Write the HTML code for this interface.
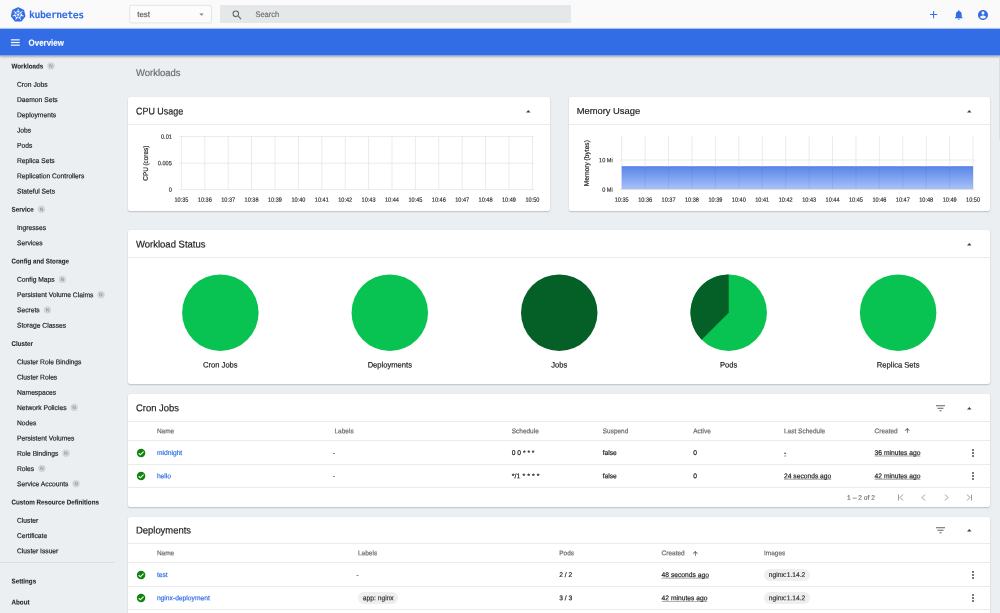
<!DOCTYPE html>
<html lang="en"><head><meta charset="utf-8"><title>Kubernetes Dashboard</title>
<style>
html,body{margin:0;padding:0;}
body{width:1000px;height:613px;overflow:hidden;position:relative;background:#eceff1;font-family:"Liberation Sans",Arial,sans-serif;}
.t{position:absolute;white-space:nowrap;}
.card{position:absolute;background:#fff;border-radius:2px;box-shadow:0 1px 1.5px rgba(0,0,0,.19),0 0 1px rgba(0,0,0,.10);}
.bd{display:inline-block;width:7.4px;height:7.4px;border-radius:50%;background:#d4d7d9;color:#8a8d8f;font-size:4.2px;line-height:7.4px;text-align:center;font-weight:400;letter-spacing:0;vertical-align:0.4px;margin-left:4.2px;}
.u{text-decoration:underline;text-decoration-style:dotted;text-decoration-thickness:.6px;text-underline-offset:1px;}
.chip{position:absolute;background:#efefef;border-radius:6.1px;height:12.2px;}
svg{position:absolute;overflow:visible;}
</style></head><body>

<div style="position:absolute;left:0.00px;top:0.00px;width:1000.00px;height:28.50px;background:#fafafa;"></div>
<svg style="left:0;top:0" width="40" height="29" viewBox="0 0 40 29">
<polygon points="18.15,7.80 23.54,10.40 24.88,16.24 21.14,20.92 15.16,20.92 11.42,16.24 12.76,10.40" fill="#326de6" stroke="#326de6" stroke-width="1.2" stroke-linejoin="round"/>
<g stroke="#fff" stroke-width="0.75" fill="none" stroke-linecap="round"><line x1="18.15" y1="13.50" x2="18.15" y2="11.40" stroke-width="0.5"/><line x1="18.15" y1="11.40" x2="18.15" y2="9.50" stroke-width="0.95"/><line x1="19.09" y1="13.95" x2="20.73" y2="12.64" stroke-width="0.5"/><line x1="20.73" y1="12.64" x2="22.22" y2="11.46" stroke-width="0.95"/><line x1="19.32" y1="14.97" x2="21.37" y2="15.43" stroke-width="0.5"/><line x1="21.37" y1="15.43" x2="23.22" y2="15.86" stroke-width="0.95"/><line x1="18.67" y1="15.78" x2="19.58" y2="17.67" stroke-width="0.5"/><line x1="19.58" y1="17.67" x2="20.41" y2="19.39" stroke-width="0.95"/><line x1="17.63" y1="15.78" x2="16.72" y2="17.67" stroke-width="0.5"/><line x1="16.72" y1="17.67" x2="15.89" y2="19.39" stroke-width="0.95"/><line x1="16.98" y1="14.97" x2="14.93" y2="15.43" stroke-width="0.5"/><line x1="14.93" y1="15.43" x2="13.08" y2="15.86" stroke-width="0.95"/><line x1="17.21" y1="13.95" x2="15.57" y2="12.64" stroke-width="0.5"/><line x1="15.57" y1="12.64" x2="14.08" y2="11.46" stroke-width="0.95"/>
<circle cx="18.15" cy="14.7" r="3.3" stroke-width="0.75"/></g>
<circle cx="18.15" cy="14.7" r="0.9" fill="#fff"/>
</svg>
<div style="position:absolute;left:220.00px;top:5.40px;width:351.00px;height:17.60px;background:#e5e8e9;border-radius:1px;"></div>
<svg style="left:230.9px;top:8.9px" width="12.2" height="12.2" viewBox="0 0 24 24"><path fill="#5f6368" d="M15.5 14h-.79l-.28-.27A6.47 6.47 0 0 0 16 9.5 6.5 6.5 0 1 0 9.500 16c1.610 0 3.090-.590 4.230-1.570l.27.28v.79l5 4.990L20.490 19zm-6 0C7.010 14 5 11.990 5 9.500S7.010 5 9.500 5 14 7.010 14 9.500 11.990 14 9.500 14"/></svg>
<svg style="left:929.9px;top:11.2px" width="7.2" height="7.2" viewBox="0 0 14 14"><path fill="#326de6" d="M14 8H8v6H6V8H0V6h6V0h2v6h6z"/></svg>
<svg style="left:952.7px;top:8.7px" width="11.6" height="11.6" viewBox="0 0 24 24"><path fill="#326de6" d="M12 22c1.100 0 2-.900 2-2h-4c0 1.100.890 2 2 2m6-6v-5c0-3.070-1.640-5.640-4.500-6.320V4c0-.830-.670-1.500-1.500-1.500s-1.500.670-1.500 1.500v.680C7.630 5.360 6 7.920 6 11v5l-2 2v1h16v-1z"/></svg>
<svg style="left:977.2px;top:8.5px" width="12" height="12" viewBox="0 0 24 24"><path fill="#326de6" d="M12 2C6.480 2 2 6.480 2 12s4.480 10 10 10 10-4.480 10-10S17.520 2 12 2m0 3c1.660 0 3 1.340 3 3s-1.340 3-3 3-3-1.340-3-3 1.340-3 3-3m0 14.200c-2.500 0-4.710-1.280-6-3.220.030-1.990 4-3.080 6-3.080 1.990 0 5.970 1.090 6 3.080-1.290 1.940-3.500 3.220-6 3.220"/></svg>
<div style="position:absolute;left:0.00px;top:28.00px;width:1000.00px;height:28.00px;background:linear-gradient(#326de6,#326de6) 0 1px/100% 26px no-repeat,linear-gradient(#aac2f2,#aac2f2) 0 0/100% 1px no-repeat, #8ca7dd;box-shadow:0 0.5px 2px rgba(0,0,0,.28);z-index:5;"></div>
<div style="position:absolute;left:998.80px;top:57.00px;width:1.20px;height:83.00px;background:rgba(0,0,0,.07);"></div>
<div style="position:absolute;left:0.00px;top:561.60px;width:114.80px;height:1.00px;background:#dcdfe1;"></div>
<div class="card" style="left:128px;top:97.4px;width:422.00px;height:113.40px;"></div>
<svg style="left:526.30px;top:110.10px" width="4.6" height="2.5" viewBox="0 0 5.2 2.8"><path d="M0 2.800L2.600 0l2.600 2.800z" fill="#424242"/></svg>
<div style="position:absolute;left:128.00px;top:123.80px;width:422.00px;height:1.00px;background:#ebebeb;"></div>
<div class="card" style="left:569px;top:97.4px;width:421.20px;height:113.40px;"></div>
<svg style="left:966.50px;top:110.10px" width="4.6" height="2.5" viewBox="0 0 5.2 2.8"><path d="M0 2.800L2.600 0l2.600 2.800z" fill="#424242"/></svg>
<div style="position:absolute;left:569.00px;top:123.80px;width:421.20px;height:1.00px;background:#ebebeb;"></div>
<div class="card" style="left:128px;top:230.4px;width:862.20px;height:153.80px;"></div>
<svg style="left:966.70px;top:243.10px" width="4.6" height="2.5" viewBox="0 0 5.2 2.8"><path d="M0 2.800L2.600 0l2.600 2.800z" fill="#424242"/></svg>
<div style="position:absolute;left:128.00px;top:256.80px;width:862.20px;height:1.00px;background:#ebebeb;"></div>
<svg style="left:0;top:0" width="1000" height="613" viewBox="0 0 1000 613"><circle cx="220.35" cy="312.65" r="38.25" fill="#08c351"/><circle cx="389.80" cy="312.65" r="38.25" fill="#08c351"/><circle cx="559.25" cy="312.65" r="38.25" fill="#056028"/><circle cx="728.70" cy="312.65" r="38.25" fill="#08c351"/><path d="M728.70 312.65 L728.70 274.4 A38.25 38.25 0 0 0 701.65 339.70 Z" fill="#056028"/><circle cx="898.15" cy="312.65" r="38.25" fill="#08c351"/></svg>
<div class="card" style="left:128px;top:394.4px;width:862.20px;height:112.20px;"></div>
<svg style="left:936.10px;top:404.80px" width="9" height="6.400" viewBox="0 0 18 12"><path fill="#616161" d="M7 12h4v-2H7zM0 0v2h18V0zm3 7h12V5H3z"/></svg>
<svg style="left:966.90px;top:407.20px" width="4.6" height="2.5" viewBox="0 0 5.2 2.8"><path d="M0 2.800L2.600 0l2.600 2.800z" fill="#424242"/></svg>
<div style="position:absolute;left:128.00px;top:421.00px;width:862.20px;height:1.00px;background:#ebebeb;"></div>
<div style="position:absolute;left:128.00px;top:440.10px;width:862.20px;height:1.00px;background:#ebebeb;"></div>
<svg style="left:905.20px;top:428.40px" width="4.600" height="4.800" viewBox="0 0 16 16"><path fill="#555" stroke="#555" stroke-width="0.8" d="M7 16V3.830L1.410 9.420 0 8l8-8 8 8-1.410 1.420L9 3.830V16z"/></svg>
<svg style="left:135.50px;top:447.50px" width="10.2" height="10.2" viewBox="0 0 24 24"><path fill="#0e840e" d="M12 2C6.480 2 2 6.480 2 12s4.480 10 10 10 10-4.480 10-10S17.520 2 12 2z"/><path fill="none" stroke="#fff" stroke-width="2.600" d="M6.400 12.300l3.800 3.800 7.600-7.800"/></svg>
<svg style="left:972.00px;top:448.70px" width="2" height="8" viewBox="0 0 2 8"><circle cx="1" cy="1" r=".95" fill="#424242"/><circle cx="1" cy="4" r=".95" fill="#424242"/><circle cx="1" cy="7" r=".95" fill="#424242"/></svg>
<div style="position:absolute;left:128.00px;top:463.50px;width:862.20px;height:1.00px;background:#ebebeb;"></div>
<svg style="left:135.50px;top:470.70px" width="10.2" height="10.2" viewBox="0 0 24 24"><path fill="#0e840e" d="M12 2C6.480 2 2 6.480 2 12s4.480 10 10 10 10-4.480 10-10S17.520 2 12 2z"/><path fill="none" stroke="#fff" stroke-width="2.600" d="M6.400 12.300l3.800 3.800 7.600-7.800"/></svg>
<svg style="left:972.00px;top:471.90px" width="2" height="8" viewBox="0 0 2 8"><circle cx="1" cy="1" r=".95" fill="#424242"/><circle cx="1" cy="4" r=".95" fill="#424242"/><circle cx="1" cy="7" r=".95" fill="#424242"/></svg>
<div style="position:absolute;left:128.00px;top:486.50px;width:862.20px;height:1.00px;background:#ebebeb;"></div>
<svg style="left:897.10px;top:494.10px" width="7" height="7" viewBox="0 0 14 14"><g fill="none" stroke="#8e8e8e" stroke-width="1.800"><path d="M3 1v12"/><path d="M12 1L6 7l6 6"/></g></svg>
<svg style="left:919.70px;top:494.10px" width="7" height="7" viewBox="0 0 14 14"><g fill="none" stroke="#8e8e8e" stroke-width="1.800"><path d="M10 1L4 7l6 6"/></g></svg>
<svg style="left:942.60px;top:494.10px" width="7" height="7" viewBox="0 0 14 14"><g fill="none" stroke="#8e8e8e" stroke-width="1.800"><path d="M4 1l6 6-6 6"/></g></svg>
<svg style="left:965.70px;top:494.10px" width="7" height="7" viewBox="0 0 14 14"><g fill="none" stroke="#8e8e8e" stroke-width="1.800"><path d="M11 1v12"/><path d="M2 1l6 6-6 6"/></g></svg>
<div class="card" style="left:128px;top:516.5px;width:862.20px;height:183.50px;"></div>
<svg style="left:936.10px;top:526.90px" width="9" height="6.400" viewBox="0 0 18 12"><path fill="#616161" d="M7 12h4v-2H7zM0 0v2h18V0zm3 7h12V5H3z"/></svg>
<svg style="left:966.90px;top:529.30px" width="4.6" height="2.5" viewBox="0 0 5.2 2.8"><path d="M0 2.800L2.600 0l2.600 2.800z" fill="#424242"/></svg>
<div style="position:absolute;left:128.00px;top:543.10px;width:862.20px;height:1.00px;background:#ebebeb;"></div>
<div style="position:absolute;left:128.00px;top:562.20px;width:862.20px;height:1.00px;background:#ebebeb;"></div>
<svg style="left:692.60px;top:550.50px" width="4.600" height="4.800" viewBox="0 0 16 16"><path fill="#555" stroke="#555" stroke-width="0.8" d="M7 16V3.830L1.410 9.420 0 8l8-8 8 8-1.410 1.420L9 3.830V16z"/></svg>
<svg style="left:135.50px;top:569.60px" width="10.2" height="10.2" viewBox="0 0 24 24"><path fill="#0e840e" d="M12 2C6.480 2 2 6.480 2 12s4.480 10 10 10 10-4.480 10-10S17.520 2 12 2z"/><path fill="none" stroke="#fff" stroke-width="2.600" d="M6.400 12.300l3.800 3.800 7.600-7.800"/></svg>
<div class="chip" style="left:764.00px;top:568.60px;width:45.80px;"></div>
<svg style="left:972.00px;top:570.80px" width="2" height="8" viewBox="0 0 2 8"><circle cx="1" cy="1" r=".95" fill="#424242"/><circle cx="1" cy="4" r=".95" fill="#424242"/><circle cx="1" cy="7" r=".95" fill="#424242"/></svg>
<div style="position:absolute;left:128.00px;top:585.60px;width:862.20px;height:1.00px;background:#ebebeb;"></div>
<svg style="left:135.50px;top:592.80px" width="10.2" height="10.2" viewBox="0 0 24 24"><path fill="#0e840e" d="M12 2C6.480 2 2 6.480 2 12s4.480 10 10 10 10-4.480 10-10S17.520 2 12 2z"/><path fill="none" stroke="#fff" stroke-width="2.600" d="M6.400 12.300l3.800 3.800 7.600-7.800"/></svg>
<div class="chip" style="left:358.00px;top:591.80px;width:40.00px;"></div>
<div class="chip" style="left:764.00px;top:591.80px;width:45.80px;"></div>
<svg style="left:972.00px;top:594.00px" width="2" height="8" viewBox="0 0 2 8"><circle cx="1" cy="1" r=".95" fill="#424242"/><circle cx="1" cy="4" r=".95" fill="#424242"/><circle cx="1" cy="7" r=".95" fill="#424242"/></svg>
<div style="position:absolute;left:128.00px;top:608.60px;width:862.20px;height:1.00px;background:#ebebeb;"></div>
<svg style="left:0;top:0;z-index:10;font-family:'Liberation Sans',Arial,sans-serif;" width="1000" height="613" viewBox="0 0 1000 613"><defs><linearGradient id="ag" x1="0" y1="0" x2="0" y2="1"><stop offset="0" stop-color="#5885e9"/><stop offset="1" stop-color="#abc2f6"/></linearGradient><filter id="gs" x="0" y="0" width="1000" height="613" filterUnits="userSpaceOnUse"><feOffset dx="0" dy="0"/></filter></defs><g filter="url(#gs)"><text x="29.00" y="18.10" font-size="9.90" fill="#326de6" text-anchor="start" letter-spacing="-0.475" font-weight="700" transform="rotate(0.05 29.00 18.10)" font-family="DejaVu Sans Mono, Liberation Mono, monospace">kubernetes</text>
<rect x="129.7" y="5.3" width="81.8" height="17.6" rx="1.5" fill="#fcfcfc" stroke="#e4e4e4" stroke-width="1"/>
<text x="137.20" y="17.00" font-size="7.97" fill="#616161" text-anchor="start" textLength="12.80" lengthAdjust="spacingAndGlyphs" stroke="#616161" stroke-width="0.18" transform="rotate(0.05 137.20 17.00)">test</text>
<path d="M199.3 13.5h4.4l-2.2 2.3z" fill="#808080"/>
<text x="255.40" y="17.00" font-size="8.07" fill="#707070" text-anchor="start" textLength="23.80" lengthAdjust="spacingAndGlyphs" stroke="#707070" stroke-width="0.18" transform="rotate(0.05 255.40 17.00)">Search</text>
<line x1="10.9" x2="19.7" y1="39.85" y2="39.85" stroke="#fff" stroke-width="1.15"/>
<line x1="10.9" x2="19.7" y1="42.5" y2="42.5" stroke="#fff" stroke-width="1.15"/>
<line x1="10.9" x2="19.7" y1="45.15" y2="45.15" stroke="#fff" stroke-width="1.15"/>
<text x="28.60" y="45.70" font-size="9.00" fill="#fff" text-anchor="start" textLength="35.20" lengthAdjust="spacingAndGlyphs" font-weight="700" stroke="#fff" stroke-width="0.12" transform="rotate(0.05 28.60 45.70)">Overview</text>
<text x="11.50" y="68.40" font-size="6.99" fill="#1f1f1f" text-anchor="start" textLength="31.80" lengthAdjust="spacingAndGlyphs" font-weight="700" stroke="#1f1f1f" stroke-width="0.08" transform="rotate(0.05 11.50 68.40)">Workloads</text>
<circle cx="51.00" cy="65.95" r="3.7" fill="#d3d6d8"/>
<text x="51.00" y="67.55" font-size="4.6" fill="#787b7d" text-anchor="middle" transform="rotate(0.05 51.00 65.95)">N</text>
<text x="17.00" y="86.67" font-size="6.93" fill="#212121" text-anchor="start" textLength="30.54" lengthAdjust="spacingAndGlyphs" stroke="#212121" stroke-width="0.18" transform="rotate(0.05 17.00 86.67)">Cron Jobs</text>
<text x="17.00" y="101.93" font-size="6.93" fill="#212121" text-anchor="start" textLength="40.59" lengthAdjust="spacingAndGlyphs" stroke="#212121" stroke-width="0.18" transform="rotate(0.05 17.00 101.93)">Daemon Sets</text>
<text x="17.00" y="117.19" font-size="6.93" fill="#212121" text-anchor="start" textLength="39.10" lengthAdjust="spacingAndGlyphs" stroke="#212121" stroke-width="0.18" transform="rotate(0.05 17.00 117.19)">Deployments</text>
<text x="17.00" y="132.45" font-size="6.93" fill="#212121" text-anchor="start" textLength="14.15" lengthAdjust="spacingAndGlyphs" stroke="#212121" stroke-width="0.18" transform="rotate(0.05 17.00 132.45)">Jobs</text>
<text x="17.00" y="147.71" font-size="6.93" fill="#212121" text-anchor="start" textLength="15.27" lengthAdjust="spacingAndGlyphs" stroke="#212121" stroke-width="0.18" transform="rotate(0.05 17.00 147.71)">Pods</text>
<text x="17.00" y="162.97" font-size="6.93" fill="#212121" text-anchor="start" textLength="37.61" lengthAdjust="spacingAndGlyphs" stroke="#212121" stroke-width="0.18" transform="rotate(0.05 17.00 162.97)">Replica Sets</text>
<text x="17.00" y="178.23" font-size="6.93" fill="#212121" text-anchor="start" textLength="67.40" lengthAdjust="spacingAndGlyphs" stroke="#212121" stroke-width="0.18" transform="rotate(0.05 17.00 178.23)">Replication Controllers</text>
<text x="17.00" y="193.49" font-size="6.93" fill="#212121" text-anchor="start" textLength="37.99" lengthAdjust="spacingAndGlyphs" stroke="#212121" stroke-width="0.18" transform="rotate(0.05 17.00 193.49)">Stateful Sets</text>
<text x="11.50" y="211.76" font-size="6.99" fill="#1f1f1f" text-anchor="start" textLength="22.22" lengthAdjust="spacingAndGlyphs" font-weight="700" stroke="#1f1f1f" stroke-width="0.08" transform="rotate(0.05 11.50 211.76)">Service</text>
<circle cx="41.42" cy="209.31" r="3.7" fill="#d3d6d8"/>
<text x="41.42" y="210.91" font-size="4.6" fill="#787b7d" text-anchor="middle" transform="rotate(0.05 41.42 209.31)">N</text>
<text x="17.00" y="230.03" font-size="6.93" fill="#212121" text-anchor="start" textLength="29.05" lengthAdjust="spacingAndGlyphs" stroke="#212121" stroke-width="0.18" transform="rotate(0.05 17.00 230.03)">Ingresses</text>
<text x="17.00" y="245.29" font-size="6.93" fill="#212121" text-anchor="start" textLength="25.69" lengthAdjust="spacingAndGlyphs" stroke="#212121" stroke-width="0.18" transform="rotate(0.05 17.00 245.29)">Services</text>
<text x="11.50" y="263.56" font-size="6.99" fill="#1f1f1f" text-anchor="start" textLength="57.58" lengthAdjust="spacingAndGlyphs" font-weight="700" stroke="#1f1f1f" stroke-width="0.08" transform="rotate(0.05 11.50 263.56)">Config and Storage</text>
<text x="17.00" y="281.83" font-size="6.93" fill="#212121" text-anchor="start" textLength="37.61" lengthAdjust="spacingAndGlyphs" stroke="#212121" stroke-width="0.18" transform="rotate(0.05 17.00 281.83)">Config Maps</text>
<circle cx="62.31" cy="279.38" r="3.7" fill="#d3d6d8"/>
<text x="62.31" y="280.98" font-size="4.6" fill="#787b7d" text-anchor="middle" transform="rotate(0.05 62.31 279.38)">N</text>
<text x="17.00" y="297.09" font-size="6.93" fill="#212121" text-anchor="start" textLength="76.34" lengthAdjust="spacingAndGlyphs" stroke="#212121" stroke-width="0.18" transform="rotate(0.05 17.00 297.09)">Persistent Volume Claims</text>
<circle cx="101.04" cy="294.64" r="3.7" fill="#d3d6d8"/>
<text x="101.04" y="296.24" font-size="4.6" fill="#787b7d" text-anchor="middle" transform="rotate(0.05 101.04 294.64)">N</text>
<text x="17.00" y="312.35" font-size="6.93" fill="#212121" text-anchor="start" textLength="22.71" lengthAdjust="spacingAndGlyphs" stroke="#212121" stroke-width="0.18" transform="rotate(0.05 17.00 312.35)">Secrets</text>
<circle cx="47.41" cy="309.90" r="3.7" fill="#d3d6d8"/>
<text x="47.41" y="311.50" font-size="4.6" fill="#787b7d" text-anchor="middle" transform="rotate(0.05 47.41 309.90)">N</text>
<text x="17.00" y="327.61" font-size="6.93" fill="#212121" text-anchor="start" textLength="49.16" lengthAdjust="spacingAndGlyphs" stroke="#212121" stroke-width="0.18" transform="rotate(0.05 17.00 327.61)">Storage Classes</text>
<text x="11.50" y="345.88" font-size="6.99" fill="#1f1f1f" text-anchor="start" textLength="21.51" lengthAdjust="spacingAndGlyphs" font-weight="700" stroke="#1f1f1f" stroke-width="0.08" transform="rotate(0.05 11.50 345.88)">Cluster</text>
<text x="17.00" y="364.15" font-size="6.93" fill="#212121" text-anchor="start" textLength="64.43" lengthAdjust="spacingAndGlyphs" stroke="#212121" stroke-width="0.18" transform="rotate(0.05 17.00 364.15)">Cluster Role Bindings</text>
<text x="17.00" y="379.41" font-size="6.93" fill="#212121" text-anchor="start" textLength="40.21" lengthAdjust="spacingAndGlyphs" stroke="#212121" stroke-width="0.18" transform="rotate(0.05 17.00 379.41)">Cluster Roles</text>
<text x="17.00" y="394.67" font-size="6.93" fill="#212121" text-anchor="start" textLength="39.10" lengthAdjust="spacingAndGlyphs" stroke="#212121" stroke-width="0.18" transform="rotate(0.05 17.00 394.67)">Namespaces</text>
<text x="17.00" y="409.93" font-size="6.93" fill="#212121" text-anchor="start" textLength="49.52" lengthAdjust="spacingAndGlyphs" stroke="#212121" stroke-width="0.18" transform="rotate(0.05 17.00 409.93)">Network Policies</text>
<circle cx="74.22" cy="407.48" r="3.7" fill="#d3d6d8"/>
<text x="74.22" y="409.08" font-size="4.6" fill="#787b7d" text-anchor="middle" transform="rotate(0.05 74.22 407.48)">N</text>
<text x="17.00" y="425.19" font-size="6.93" fill="#212121" text-anchor="start" textLength="19.37" lengthAdjust="spacingAndGlyphs" stroke="#212121" stroke-width="0.18" transform="rotate(0.05 17.00 425.19)">Nodes</text>
<text x="17.00" y="440.45" font-size="6.93" fill="#212121" text-anchor="start" textLength="57.35" lengthAdjust="spacingAndGlyphs" stroke="#212121" stroke-width="0.18" transform="rotate(0.05 17.00 440.45)">Persistent Volumes</text>
<text x="17.00" y="455.71" font-size="6.93" fill="#212121" text-anchor="start" textLength="41.34" lengthAdjust="spacingAndGlyphs" stroke="#212121" stroke-width="0.18" transform="rotate(0.05 17.00 455.71)">Role Bindings</text>
<circle cx="66.04" cy="453.26" r="3.7" fill="#d3d6d8"/>
<text x="66.04" y="454.86" font-size="4.6" fill="#787b7d" text-anchor="middle" transform="rotate(0.05 66.04 453.26)">N</text>
<text x="17.00" y="470.97" font-size="6.93" fill="#212121" text-anchor="start" textLength="17.13" lengthAdjust="spacingAndGlyphs" stroke="#212121" stroke-width="0.18" transform="rotate(0.05 17.00 470.97)">Roles</text>
<circle cx="41.83" cy="468.52" r="3.7" fill="#d3d6d8"/>
<text x="41.83" y="470.12" font-size="4.6" fill="#787b7d" text-anchor="middle" transform="rotate(0.05 41.83 468.52)">N</text>
<text x="17.00" y="486.23" font-size="6.93" fill="#212121" text-anchor="start" textLength="51.39" lengthAdjust="spacingAndGlyphs" stroke="#212121" stroke-width="0.18" transform="rotate(0.05 17.00 486.23)">Service Accounts</text>
<circle cx="76.09" cy="483.78" r="3.7" fill="#d3d6d8"/>
<text x="76.09" y="485.38" font-size="4.6" fill="#787b7d" text-anchor="middle" transform="rotate(0.05 76.09 483.78)">N</text>
<text x="11.50" y="504.50" font-size="6.99" fill="#1f1f1f" text-anchor="start" textLength="87.43" lengthAdjust="spacingAndGlyphs" font-weight="700" stroke="#1f1f1f" stroke-width="0.08" transform="rotate(0.05 11.50 504.50)">Custom Resource Definitions</text>
<text x="17.00" y="522.77" font-size="6.93" fill="#212121" text-anchor="start" textLength="21.22" lengthAdjust="spacingAndGlyphs" stroke="#212121" stroke-width="0.18" transform="rotate(0.05 17.00 522.77)">Cluster</text>
<text x="17.00" y="538.03" font-size="6.93" fill="#212121" text-anchor="start" textLength="30.16" lengthAdjust="spacingAndGlyphs" stroke="#212121" stroke-width="0.18" transform="rotate(0.05 17.00 538.03)">Certificate</text>
<text x="17.00" y="553.29" font-size="6.93" fill="#212121" text-anchor="start" textLength="41.33" lengthAdjust="spacingAndGlyphs" stroke="#212121" stroke-width="0.18" transform="rotate(0.05 17.00 553.29)">Cluster Issuer</text>
<text x="11.50" y="583.40" font-size="6.99" fill="#1f1f1f" text-anchor="start" textLength="24.63" lengthAdjust="spacingAndGlyphs" font-weight="700" stroke="#1f1f1f" stroke-width="0.08" transform="rotate(0.05 11.50 583.40)">Settings</text>
<text x="11.50" y="604.40" font-size="6.99" fill="#1f1f1f" text-anchor="start" textLength="18.03" lengthAdjust="spacingAndGlyphs" font-weight="700" stroke="#1f1f1f" stroke-width="0.08" transform="rotate(0.05 11.50 604.40)">About</text>
<text x="136.00" y="76.00" font-size="9.83" fill="#6b6b6b" text-anchor="start" textLength="44.60" lengthAdjust="spacingAndGlyphs" stroke="#6b6b6b" stroke-width="0.18" transform="rotate(0.05 136.00 76.00)">Workloads</text>
<text x="136.00" y="114.40" font-size="9.83" fill="#212121" text-anchor="start" textLength="47.20" lengthAdjust="spacingAndGlyphs" stroke="#212121" stroke-width="0.18" transform="rotate(0.05 136.00 114.40)">CPU Usage</text>
<line x1="181.40" x2="181.40" y1="136.2" y2="189.9" stroke="#e4e4e4" stroke-width="0.75"/>
<text x="181.40" y="201.65" font-size="6.21" fill="#333" text-anchor="middle" textLength="13.96" lengthAdjust="spacingAndGlyphs" stroke="#333" stroke-width="0.18" transform="rotate(0.05 181.40 201.65)">10:35</text>
<line x1="204.80" x2="204.80" y1="136.2" y2="189.9" stroke="#e4e4e4" stroke-width="0.75"/>
<text x="204.80" y="201.65" font-size="6.21" fill="#333" text-anchor="middle" textLength="13.96" lengthAdjust="spacingAndGlyphs" stroke="#333" stroke-width="0.18" transform="rotate(0.05 204.80 201.65)">10:36</text>
<line x1="228.20" x2="228.20" y1="136.2" y2="189.9" stroke="#e4e4e4" stroke-width="0.75"/>
<text x="228.20" y="201.65" font-size="6.21" fill="#333" text-anchor="middle" textLength="13.96" lengthAdjust="spacingAndGlyphs" stroke="#333" stroke-width="0.18" transform="rotate(0.05 228.20 201.65)">10:37</text>
<line x1="251.60" x2="251.60" y1="136.2" y2="189.9" stroke="#e4e4e4" stroke-width="0.75"/>
<text x="251.60" y="201.65" font-size="6.21" fill="#333" text-anchor="middle" textLength="13.96" lengthAdjust="spacingAndGlyphs" stroke="#333" stroke-width="0.18" transform="rotate(0.05 251.60 201.65)">10:38</text>
<line x1="275.00" x2="275.00" y1="136.2" y2="189.9" stroke="#e4e4e4" stroke-width="0.75"/>
<text x="275.00" y="201.65" font-size="6.21" fill="#333" text-anchor="middle" textLength="13.96" lengthAdjust="spacingAndGlyphs" stroke="#333" stroke-width="0.18" transform="rotate(0.05 275.00 201.65)">10:39</text>
<line x1="298.40" x2="298.40" y1="136.2" y2="189.9" stroke="#e4e4e4" stroke-width="0.75"/>
<text x="298.40" y="201.65" font-size="6.21" fill="#333" text-anchor="middle" textLength="13.96" lengthAdjust="spacingAndGlyphs" stroke="#333" stroke-width="0.18" transform="rotate(0.05 298.40 201.65)">10:40</text>
<line x1="321.80" x2="321.80" y1="136.2" y2="189.9" stroke="#e4e4e4" stroke-width="0.75"/>
<text x="321.80" y="201.65" font-size="6.21" fill="#333" text-anchor="middle" textLength="13.96" lengthAdjust="spacingAndGlyphs" stroke="#333" stroke-width="0.18" transform="rotate(0.05 321.80 201.65)">10:41</text>
<line x1="345.20" x2="345.20" y1="136.2" y2="189.9" stroke="#e4e4e4" stroke-width="0.75"/>
<text x="345.20" y="201.65" font-size="6.21" fill="#333" text-anchor="middle" textLength="13.96" lengthAdjust="spacingAndGlyphs" stroke="#333" stroke-width="0.18" transform="rotate(0.05 345.20 201.65)">10:42</text>
<line x1="368.60" x2="368.60" y1="136.2" y2="189.9" stroke="#e4e4e4" stroke-width="0.75"/>
<text x="368.60" y="201.65" font-size="6.21" fill="#333" text-anchor="middle" textLength="13.96" lengthAdjust="spacingAndGlyphs" stroke="#333" stroke-width="0.18" transform="rotate(0.05 368.60 201.65)">10:43</text>
<line x1="392.00" x2="392.00" y1="136.2" y2="189.9" stroke="#e4e4e4" stroke-width="0.75"/>
<text x="392.00" y="201.65" font-size="6.21" fill="#333" text-anchor="middle" textLength="13.96" lengthAdjust="spacingAndGlyphs" stroke="#333" stroke-width="0.18" transform="rotate(0.05 392.00 201.65)">10:44</text>
<line x1="415.40" x2="415.40" y1="136.2" y2="189.9" stroke="#e4e4e4" stroke-width="0.75"/>
<text x="415.40" y="201.65" font-size="6.21" fill="#333" text-anchor="middle" textLength="13.96" lengthAdjust="spacingAndGlyphs" stroke="#333" stroke-width="0.18" transform="rotate(0.05 415.40 201.65)">10:45</text>
<line x1="438.80" x2="438.80" y1="136.2" y2="189.9" stroke="#e4e4e4" stroke-width="0.75"/>
<text x="438.80" y="201.65" font-size="6.21" fill="#333" text-anchor="middle" textLength="13.96" lengthAdjust="spacingAndGlyphs" stroke="#333" stroke-width="0.18" transform="rotate(0.05 438.80 201.65)">10:46</text>
<line x1="462.20" x2="462.20" y1="136.2" y2="189.9" stroke="#e4e4e4" stroke-width="0.75"/>
<text x="462.20" y="201.65" font-size="6.21" fill="#333" text-anchor="middle" textLength="13.96" lengthAdjust="spacingAndGlyphs" stroke="#333" stroke-width="0.18" transform="rotate(0.05 462.20 201.65)">10:47</text>
<line x1="485.60" x2="485.60" y1="136.2" y2="189.9" stroke="#e4e4e4" stroke-width="0.75"/>
<text x="485.60" y="201.65" font-size="6.21" fill="#333" text-anchor="middle" textLength="13.96" lengthAdjust="spacingAndGlyphs" stroke="#333" stroke-width="0.18" transform="rotate(0.05 485.60 201.65)">10:48</text>
<line x1="509.00" x2="509.00" y1="136.2" y2="189.9" stroke="#e4e4e4" stroke-width="0.75"/>
<text x="509.00" y="201.65" font-size="6.21" fill="#333" text-anchor="middle" textLength="13.96" lengthAdjust="spacingAndGlyphs" stroke="#333" stroke-width="0.18" transform="rotate(0.05 509.00 201.65)">10:49</text>
<line x1="532.40" x2="532.40" y1="136.2" y2="189.9" stroke="#e4e4e4" stroke-width="0.75"/>
<text x="532.40" y="201.65" font-size="6.21" fill="#333" text-anchor="middle" textLength="13.96" lengthAdjust="spacingAndGlyphs" stroke="#333" stroke-width="0.18" transform="rotate(0.05 532.40 201.65)">10:50</text>
<line x1="179.00" x2="534.10" y1="136.5" y2="136.5" stroke="#e4e4e4" stroke-width="0.75"/>
<line x1="179.00" x2="534.10" y1="163.2" y2="163.2" stroke="#e4e4e4" stroke-width="0.75"/>
<line x1="179.00" x2="534.10" y1="189.6" y2="189.6" stroke="#e4e4e4" stroke-width="0.75"/>
<text x="171.90" y="138.65" font-size="6.21" fill="#333" text-anchor="end" textLength="10.96" lengthAdjust="spacingAndGlyphs" stroke="#333" stroke-width="0.18" transform="rotate(0.05 171.90 138.65)">0.01</text>
<text x="171.90" y="165.35" font-size="6.21" fill="#333" text-anchor="end" textLength="14.12" lengthAdjust="spacingAndGlyphs" stroke="#333" stroke-width="0.18" transform="rotate(0.05 171.90 165.35)">0.005</text>
<text x="171.90" y="191.75" font-size="6.21" fill="#333" text-anchor="end" textLength="3.16" lengthAdjust="spacingAndGlyphs" stroke="#333" stroke-width="0.18" transform="rotate(0.05 171.90 191.75)">0</text>
<text x="147.90" y="163.20" font-size="6.83" fill="#212121" text-anchor="middle" textLength="35.00" lengthAdjust="spacingAndGlyphs" stroke="#212121" stroke-width="0.18" transform="rotate(-89.95 147.9 163.2)">CPU (cores)</text>
<text x="576.70" y="114.40" font-size="9.83" fill="#212121" text-anchor="start" textLength="63.50" lengthAdjust="spacingAndGlyphs" stroke="#212121" stroke-width="0.18" transform="rotate(0.05 576.70 114.40)">Memory Usage</text>
<rect x="621.70" y="166.4" width="351.40" height="23.20" fill="url(#ag)"/>
<line x1="621.70" x2="973.10" y1="166.65" y2="166.65" stroke="#4674e4" stroke-width="0.5"/>
<line x1="621.70" x2="621.70" y1="136.2" y2="166.4" stroke="#e4e4e4" stroke-width="0.75"/>
<line x1="621.70" x2="621.70" y1="166.4" y2="189.6" stroke="rgba(50,70,150,.13)" stroke-width="0.75"/>
<text x="621.70" y="201.65" font-size="6.21" fill="#333" text-anchor="middle" textLength="13.96" lengthAdjust="spacingAndGlyphs" stroke="#333" stroke-width="0.18" transform="rotate(0.05 621.70 201.65)">10:35</text>
<line x1="645.13" x2="645.13" y1="136.2" y2="166.4" stroke="#e4e4e4" stroke-width="0.75"/>
<line x1="645.13" x2="645.13" y1="166.4" y2="189.6" stroke="rgba(50,70,150,.13)" stroke-width="0.75"/>
<text x="645.13" y="201.65" font-size="6.21" fill="#333" text-anchor="middle" textLength="13.96" lengthAdjust="spacingAndGlyphs" stroke="#333" stroke-width="0.18" transform="rotate(0.05 645.13 201.65)">10:36</text>
<line x1="668.55" x2="668.55" y1="136.2" y2="166.4" stroke="#e4e4e4" stroke-width="0.75"/>
<line x1="668.55" x2="668.55" y1="166.4" y2="189.6" stroke="rgba(50,70,150,.13)" stroke-width="0.75"/>
<text x="668.55" y="201.65" font-size="6.21" fill="#333" text-anchor="middle" textLength="13.96" lengthAdjust="spacingAndGlyphs" stroke="#333" stroke-width="0.18" transform="rotate(0.05 668.55 201.65)">10:37</text>
<line x1="691.98" x2="691.98" y1="136.2" y2="166.4" stroke="#e4e4e4" stroke-width="0.75"/>
<line x1="691.98" x2="691.98" y1="166.4" y2="189.6" stroke="rgba(50,70,150,.13)" stroke-width="0.75"/>
<text x="691.98" y="201.65" font-size="6.21" fill="#333" text-anchor="middle" textLength="13.96" lengthAdjust="spacingAndGlyphs" stroke="#333" stroke-width="0.18" transform="rotate(0.05 691.98 201.65)">10:38</text>
<line x1="715.41" x2="715.41" y1="136.2" y2="166.4" stroke="#e4e4e4" stroke-width="0.75"/>
<line x1="715.41" x2="715.41" y1="166.4" y2="189.6" stroke="rgba(50,70,150,.13)" stroke-width="0.75"/>
<text x="715.41" y="201.65" font-size="6.21" fill="#333" text-anchor="middle" textLength="13.96" lengthAdjust="spacingAndGlyphs" stroke="#333" stroke-width="0.18" transform="rotate(0.05 715.41 201.65)">10:39</text>
<line x1="738.83" x2="738.83" y1="136.2" y2="166.4" stroke="#e4e4e4" stroke-width="0.75"/>
<line x1="738.83" x2="738.83" y1="166.4" y2="189.6" stroke="rgba(50,70,150,.13)" stroke-width="0.75"/>
<text x="738.83" y="201.65" font-size="6.21" fill="#333" text-anchor="middle" textLength="13.96" lengthAdjust="spacingAndGlyphs" stroke="#333" stroke-width="0.18" transform="rotate(0.05 738.83 201.65)">10:40</text>
<line x1="762.26" x2="762.26" y1="136.2" y2="166.4" stroke="#e4e4e4" stroke-width="0.75"/>
<line x1="762.26" x2="762.26" y1="166.4" y2="189.6" stroke="rgba(50,70,150,.13)" stroke-width="0.75"/>
<text x="762.26" y="201.65" font-size="6.21" fill="#333" text-anchor="middle" textLength="13.96" lengthAdjust="spacingAndGlyphs" stroke="#333" stroke-width="0.18" transform="rotate(0.05 762.26 201.65)">10:41</text>
<line x1="785.69" x2="785.69" y1="136.2" y2="166.4" stroke="#e4e4e4" stroke-width="0.75"/>
<line x1="785.69" x2="785.69" y1="166.4" y2="189.6" stroke="rgba(50,70,150,.13)" stroke-width="0.75"/>
<text x="785.69" y="201.65" font-size="6.21" fill="#333" text-anchor="middle" textLength="13.96" lengthAdjust="spacingAndGlyphs" stroke="#333" stroke-width="0.18" transform="rotate(0.05 785.69 201.65)">10:42</text>
<line x1="809.11" x2="809.11" y1="136.2" y2="166.4" stroke="#e4e4e4" stroke-width="0.75"/>
<line x1="809.11" x2="809.11" y1="166.4" y2="189.6" stroke="rgba(50,70,150,.13)" stroke-width="0.75"/>
<text x="809.11" y="201.65" font-size="6.21" fill="#333" text-anchor="middle" textLength="13.96" lengthAdjust="spacingAndGlyphs" stroke="#333" stroke-width="0.18" transform="rotate(0.05 809.11 201.65)">10:43</text>
<line x1="832.54" x2="832.54" y1="136.2" y2="166.4" stroke="#e4e4e4" stroke-width="0.75"/>
<line x1="832.54" x2="832.54" y1="166.4" y2="189.6" stroke="rgba(50,70,150,.13)" stroke-width="0.75"/>
<text x="832.54" y="201.65" font-size="6.21" fill="#333" text-anchor="middle" textLength="13.96" lengthAdjust="spacingAndGlyphs" stroke="#333" stroke-width="0.18" transform="rotate(0.05 832.54 201.65)">10:44</text>
<line x1="855.97" x2="855.97" y1="136.2" y2="166.4" stroke="#e4e4e4" stroke-width="0.75"/>
<line x1="855.97" x2="855.97" y1="166.4" y2="189.6" stroke="rgba(50,70,150,.13)" stroke-width="0.75"/>
<text x="855.97" y="201.65" font-size="6.21" fill="#333" text-anchor="middle" textLength="13.96" lengthAdjust="spacingAndGlyphs" stroke="#333" stroke-width="0.18" transform="rotate(0.05 855.97 201.65)">10:45</text>
<line x1="879.39" x2="879.39" y1="136.2" y2="166.4" stroke="#e4e4e4" stroke-width="0.75"/>
<line x1="879.39" x2="879.39" y1="166.4" y2="189.6" stroke="rgba(50,70,150,.13)" stroke-width="0.75"/>
<text x="879.39" y="201.65" font-size="6.21" fill="#333" text-anchor="middle" textLength="13.96" lengthAdjust="spacingAndGlyphs" stroke="#333" stroke-width="0.18" transform="rotate(0.05 879.39 201.65)">10:46</text>
<line x1="902.82" x2="902.82" y1="136.2" y2="166.4" stroke="#e4e4e4" stroke-width="0.75"/>
<line x1="902.82" x2="902.82" y1="166.4" y2="189.6" stroke="rgba(50,70,150,.13)" stroke-width="0.75"/>
<text x="902.82" y="201.65" font-size="6.21" fill="#333" text-anchor="middle" textLength="13.96" lengthAdjust="spacingAndGlyphs" stroke="#333" stroke-width="0.18" transform="rotate(0.05 902.82 201.65)">10:47</text>
<line x1="926.25" x2="926.25" y1="136.2" y2="166.4" stroke="#e4e4e4" stroke-width="0.75"/>
<line x1="926.25" x2="926.25" y1="166.4" y2="189.6" stroke="rgba(50,70,150,.13)" stroke-width="0.75"/>
<text x="926.25" y="201.65" font-size="6.21" fill="#333" text-anchor="middle" textLength="13.96" lengthAdjust="spacingAndGlyphs" stroke="#333" stroke-width="0.18" transform="rotate(0.05 926.25 201.65)">10:48</text>
<line x1="949.67" x2="949.67" y1="136.2" y2="166.4" stroke="#e4e4e4" stroke-width="0.75"/>
<line x1="949.67" x2="949.67" y1="166.4" y2="189.6" stroke="rgba(50,70,150,.13)" stroke-width="0.75"/>
<text x="949.67" y="201.65" font-size="6.21" fill="#333" text-anchor="middle" textLength="13.96" lengthAdjust="spacingAndGlyphs" stroke="#333" stroke-width="0.18" transform="rotate(0.05 949.67 201.65)">10:49</text>
<line x1="973.10" x2="973.10" y1="136.2" y2="166.4" stroke="#e4e4e4" stroke-width="0.75"/>
<line x1="973.10" x2="973.10" y1="166.4" y2="189.6" stroke="rgba(50,70,150,.13)" stroke-width="0.75"/>
<text x="973.10" y="201.65" font-size="6.21" fill="#333" text-anchor="middle" textLength="13.96" lengthAdjust="spacingAndGlyphs" stroke="#333" stroke-width="0.18" transform="rotate(0.05 973.10 201.65)">10:50</text>
<line x1="619.30" x2="974.80" y1="160" y2="160" stroke="#e4e4e4" stroke-width="0.75"/>
<line x1="619.30" x2="974.80" y1="189.6" y2="189.6" stroke="#e4e4e4" stroke-width="0.75"/>
<text x="612.80" y="162.15" font-size="6.21" fill="#333" text-anchor="end" textLength="13.77" lengthAdjust="spacingAndGlyphs" stroke="#333" stroke-width="0.18" transform="rotate(0.05 612.80 162.15)">10 Mi</text>
<text x="612.80" y="191.75" font-size="6.21" fill="#333" text-anchor="end" textLength="10.62" lengthAdjust="spacingAndGlyphs" stroke="#333" stroke-width="0.18" transform="rotate(0.05 612.80 191.75)">0 Mi</text>
<text x="588.90" y="163.20" font-size="6.83" fill="#212121" text-anchor="middle" textLength="46.20" lengthAdjust="spacingAndGlyphs" stroke="#212121" stroke-width="0.18" transform="rotate(-89.95 588.9 163.2)">Memory (bytes)</text>
<text x="136.00" y="247.40" font-size="9.83" fill="#212121" text-anchor="start" textLength="69.50" lengthAdjust="spacingAndGlyphs" stroke="#212121" stroke-width="0.18" transform="rotate(0.05 136.00 247.40)">Workload Status</text>
<text x="220.35" y="367.60" font-size="7.87" fill="#212121" text-anchor="middle" textLength="34.64" lengthAdjust="spacingAndGlyphs" stroke="#212121" stroke-width="0.18" transform="rotate(0.05 220.35 367.60)">Cron Jobs</text>
<text x="389.80" y="367.60" font-size="7.87" fill="#212121" text-anchor="middle" textLength="44.35" lengthAdjust="spacingAndGlyphs" stroke="#212121" stroke-width="0.18" transform="rotate(0.05 389.80 367.60)">Deployments</text>
<text x="559.25" y="367.60" font-size="7.87" fill="#212121" text-anchor="middle" textLength="16.05" lengthAdjust="spacingAndGlyphs" stroke="#212121" stroke-width="0.18" transform="rotate(0.05 559.25 367.60)">Jobs</text>
<text x="728.70" y="367.60" font-size="7.87" fill="#212121" text-anchor="middle" textLength="17.32" lengthAdjust="spacingAndGlyphs" stroke="#212121" stroke-width="0.18" transform="rotate(0.05 728.70 367.60)">Pods</text>
<text x="898.15" y="367.60" font-size="7.87" fill="#212121" text-anchor="middle" textLength="42.67" lengthAdjust="spacingAndGlyphs" stroke="#212121" stroke-width="0.18" transform="rotate(0.05 898.15 367.60)">Replica Sets</text>
<text x="136.00" y="411.30" font-size="9.83" fill="#212121" text-anchor="start" textLength="43.00" lengthAdjust="spacingAndGlyphs" stroke="#212121" stroke-width="0.18" transform="rotate(0.05 136.00 411.30)">Cron Jobs</text>
<text x="156.90" y="433.20" font-size="6.73" fill="#686868" text-anchor="start" textLength="17.34" lengthAdjust="spacingAndGlyphs" stroke="#686868" stroke-width="0.18" transform="rotate(0.05 156.90 433.20)">Name</text>
<text x="334.50" y="433.20" font-size="6.73" fill="#686868" text-anchor="start" textLength="19.15" lengthAdjust="spacingAndGlyphs" stroke="#686868" stroke-width="0.18" transform="rotate(0.05 334.50 433.20)">Labels</text>
<text x="511.70" y="433.20" font-size="6.73" fill="#686868" text-anchor="start" textLength="27.11" lengthAdjust="spacingAndGlyphs" stroke="#686868" stroke-width="0.18" transform="rotate(0.05 511.70 433.20)">Schedule</text>
<text x="602.70" y="433.20" font-size="6.73" fill="#686868" text-anchor="start" textLength="25.66" lengthAdjust="spacingAndGlyphs" stroke="#686868" stroke-width="0.18" transform="rotate(0.05 602.70 433.20)">Suspend</text>
<text x="693.20" y="433.20" font-size="6.73" fill="#686868" text-anchor="start" textLength="17.70" lengthAdjust="spacingAndGlyphs" stroke="#686868" stroke-width="0.18" transform="rotate(0.05 693.20 433.20)">Active</text>
<text x="784.00" y="433.20" font-size="6.73" fill="#686868" text-anchor="start" textLength="41.20" lengthAdjust="spacingAndGlyphs" stroke="#686868" stroke-width="0.18" transform="rotate(0.05 784.00 433.20)">Last Schedule</text>
<text x="874.60" y="433.20" font-size="6.73" fill="#686868" text-anchor="start" textLength="23.13" lengthAdjust="spacingAndGlyphs" stroke="#686868" stroke-width="0.18" transform="rotate(0.05 874.60 433.20)">Created</text>
<text x="156.90" y="455.00" font-size="6.93" fill="#326de6" text-anchor="start" textLength="25.33" lengthAdjust="spacingAndGlyphs" stroke="#326de6" stroke-width="0.18" transform="rotate(0.05 156.90 455.00)">midnight</text>
<text x="333.00" y="454.90" font-size="6.21" fill="#555" text-anchor="start" textLength="2.00" lengthAdjust="spacingAndGlyphs" stroke="#555" stroke-width="0.18" transform="rotate(0.05 333.00 454.90)">-</text>
<text x="511.70" y="455.00" font-size="6.93" fill="#212121" text-anchor="start" textLength="22.80" lengthAdjust="spacingAndGlyphs" stroke="#212121" stroke-width="0.18" transform="rotate(0.05 511.70 455.00)">0 0 * * *</text>
<text x="602.70" y="455.00" font-size="6.93" fill="#212121" text-anchor="start" textLength="14.15" lengthAdjust="spacingAndGlyphs" stroke="#212121" stroke-width="0.18" transform="rotate(0.05 602.70 455.00)">false</text>
<text x="693.20" y="455.00" font-size="6.93" fill="#212121" text-anchor="start" textLength="3.73" lengthAdjust="spacingAndGlyphs" stroke="#212121" stroke-width="0.18" transform="rotate(0.05 693.20 455.00)">0</text>
<text x="784.00" y="455.00" font-size="6.93" fill="#212121" text-anchor="start" textLength="2.23" lengthAdjust="spacingAndGlyphs" stroke="#212121" stroke-width="0.18" transform="rotate(0.05 784.00 455.00)">-</text>
<line x1="784.00" x2="786.23" y1="456.00" y2="456.00" stroke="#212121" stroke-width="0.55" opacity=".8"/>
<text x="874.60" y="455.00" font-size="6.93" fill="#212121" text-anchor="start" textLength="45.81" lengthAdjust="spacingAndGlyphs" stroke="#212121" stroke-width="0.18" transform="rotate(0.05 874.60 455.00)">36 minutes ago</text>
<line x1="874.60" x2="920.41" y1="456.00" y2="456.00" stroke="#212121" stroke-width="0.55" opacity=".8"/>
<text x="156.90" y="478.20" font-size="6.93" fill="#326de6" text-anchor="start" textLength="14.16" lengthAdjust="spacingAndGlyphs" stroke="#326de6" stroke-width="0.18" transform="rotate(0.05 156.90 478.20)">hello</text>
<text x="333.00" y="478.10" font-size="6.21" fill="#555" text-anchor="start" textLength="2.00" lengthAdjust="spacingAndGlyphs" stroke="#555" stroke-width="0.18" transform="rotate(0.05 333.00 478.10)">-</text>
<text x="511.70" y="478.20" font-size="6.93" fill="#212121" text-anchor="start" textLength="27.80" lengthAdjust="spacingAndGlyphs" stroke="#212121" stroke-width="0.18" transform="rotate(0.05 511.70 478.20)">*/1 * * * *</text>
<text x="602.70" y="478.20" font-size="6.93" fill="#212121" text-anchor="start" textLength="14.15" lengthAdjust="spacingAndGlyphs" stroke="#212121" stroke-width="0.18" transform="rotate(0.05 602.70 478.20)">false</text>
<text x="693.20" y="478.20" font-size="6.93" fill="#212121" text-anchor="start" textLength="3.73" lengthAdjust="spacingAndGlyphs" stroke="#212121" stroke-width="0.18" transform="rotate(0.05 693.20 478.20)">0</text>
<text x="784.00" y="478.20" font-size="6.93" fill="#212121" text-anchor="start" textLength="47.31" lengthAdjust="spacingAndGlyphs" stroke="#212121" stroke-width="0.18" transform="rotate(0.05 784.00 478.20)">24 seconds ago</text>
<line x1="784.00" x2="831.31" y1="479.20" y2="479.20" stroke="#212121" stroke-width="0.55" opacity=".8"/>
<text x="874.60" y="478.20" font-size="6.93" fill="#212121" text-anchor="start" textLength="45.81" lengthAdjust="spacingAndGlyphs" stroke="#212121" stroke-width="0.18" transform="rotate(0.05 874.60 478.20)">42 minutes ago</text>
<line x1="874.60" x2="920.41" y1="479.20" y2="479.20" stroke="#212121" stroke-width="0.55" opacity=".8"/>
<text x="847.10" y="499.70" font-size="6.42" fill="#6e6e6e" text-anchor="start" textLength="27.80" lengthAdjust="spacingAndGlyphs" stroke="#6e6e6e" stroke-width="0.18" transform="rotate(0.05 847.10 499.70)">1 – 2 of 2</text>
<text x="136.00" y="533.40" font-size="9.83" fill="#212121" text-anchor="start" textLength="55.00" lengthAdjust="spacingAndGlyphs" stroke="#212121" stroke-width="0.18" transform="rotate(0.05 136.00 533.40)">Deployments</text>
<text x="156.90" y="555.30" font-size="6.73" fill="#686868" text-anchor="start" textLength="17.34" lengthAdjust="spacingAndGlyphs" stroke="#686868" stroke-width="0.18" transform="rotate(0.05 156.90 555.30)">Name</text>
<text x="358.00" y="555.30" font-size="6.73" fill="#686868" text-anchor="start" textLength="19.15" lengthAdjust="spacingAndGlyphs" stroke="#686868" stroke-width="0.18" transform="rotate(0.05 358.00 555.30)">Labels</text>
<text x="559.20" y="555.30" font-size="6.73" fill="#686868" text-anchor="start" textLength="14.82" lengthAdjust="spacingAndGlyphs" stroke="#686868" stroke-width="0.18" transform="rotate(0.05 559.20 555.30)">Pods</text>
<text x="661.60" y="555.30" font-size="6.73" fill="#686868" text-anchor="start" textLength="23.13" lengthAdjust="spacingAndGlyphs" stroke="#686868" stroke-width="0.18" transform="rotate(0.05 661.60 555.30)">Created</text>
<text x="764.00" y="555.30" font-size="6.73" fill="#686868" text-anchor="start" textLength="21.32" lengthAdjust="spacingAndGlyphs" stroke="#686868" stroke-width="0.18" transform="rotate(0.05 764.00 555.30)">Images</text>
<text x="156.90" y="577.10" font-size="6.93" fill="#326de6" text-anchor="start" textLength="10.80" lengthAdjust="spacingAndGlyphs" stroke="#326de6" stroke-width="0.18" transform="rotate(0.05 156.90 577.10)">test</text>
<text x="356.50" y="577.00" font-size="6.21" fill="#555" text-anchor="start" textLength="2.00" lengthAdjust="spacingAndGlyphs" stroke="#555" stroke-width="0.18" transform="rotate(0.05 356.50 577.00)">-</text>
<text x="559.20" y="577.10" font-size="6.93" fill="#212121" text-anchor="start" textLength="13.04" lengthAdjust="spacingAndGlyphs" stroke="#212121" stroke-width="0.18" transform="rotate(0.05 559.20 577.10)">2 / 2</text>
<text x="661.60" y="577.10" font-size="6.93" fill="#212121" text-anchor="start" textLength="47.31" lengthAdjust="spacingAndGlyphs" stroke="#212121" stroke-width="0.18" transform="rotate(0.05 661.60 577.10)">48 seconds ago</text>
<line x1="661.60" x2="708.91" y1="578.10" y2="578.10" stroke="#212121" stroke-width="0.55" opacity=".8"/>
<text x="768.80" y="577.05" font-size="6.93" fill="#333" text-anchor="start" textLength="36.51" lengthAdjust="spacingAndGlyphs" stroke="#333" stroke-width="0.18" transform="rotate(0.05 768.80 577.05)">nginx:1.14.2</text>
<text x="156.90" y="600.30" font-size="6.93" fill="#326de6" text-anchor="start" textLength="52.89" lengthAdjust="spacingAndGlyphs" stroke="#326de6" stroke-width="0.18" transform="rotate(0.05 156.90 600.30)">nginx-deployment</text>
<text x="362.80" y="600.25" font-size="6.93" fill="#333" text-anchor="start" textLength="30.92" lengthAdjust="spacingAndGlyphs" stroke="#333" stroke-width="0.18" transform="rotate(0.05 362.80 600.25)">app: nginx</text>
<text x="559.20" y="600.30" font-size="6.93" fill="#212121" text-anchor="start" textLength="13.04" lengthAdjust="spacingAndGlyphs" stroke="#212121" stroke-width="0.18" transform="rotate(0.05 559.20 600.30)">3 / 3</text>
<text x="661.60" y="600.30" font-size="6.93" fill="#212121" text-anchor="start" textLength="45.81" lengthAdjust="spacingAndGlyphs" stroke="#212121" stroke-width="0.18" transform="rotate(0.05 661.60 600.30)">42 minutes ago</text>
<line x1="661.60" x2="707.41" y1="601.30" y2="601.30" stroke="#212121" stroke-width="0.55" opacity=".8"/>
<text x="768.80" y="600.25" font-size="6.93" fill="#333" text-anchor="start" textLength="36.51" lengthAdjust="spacingAndGlyphs" stroke="#333" stroke-width="0.18" transform="rotate(0.05 768.80 600.25)">nginx:1.14.2</text></g></svg>
</body></html>
